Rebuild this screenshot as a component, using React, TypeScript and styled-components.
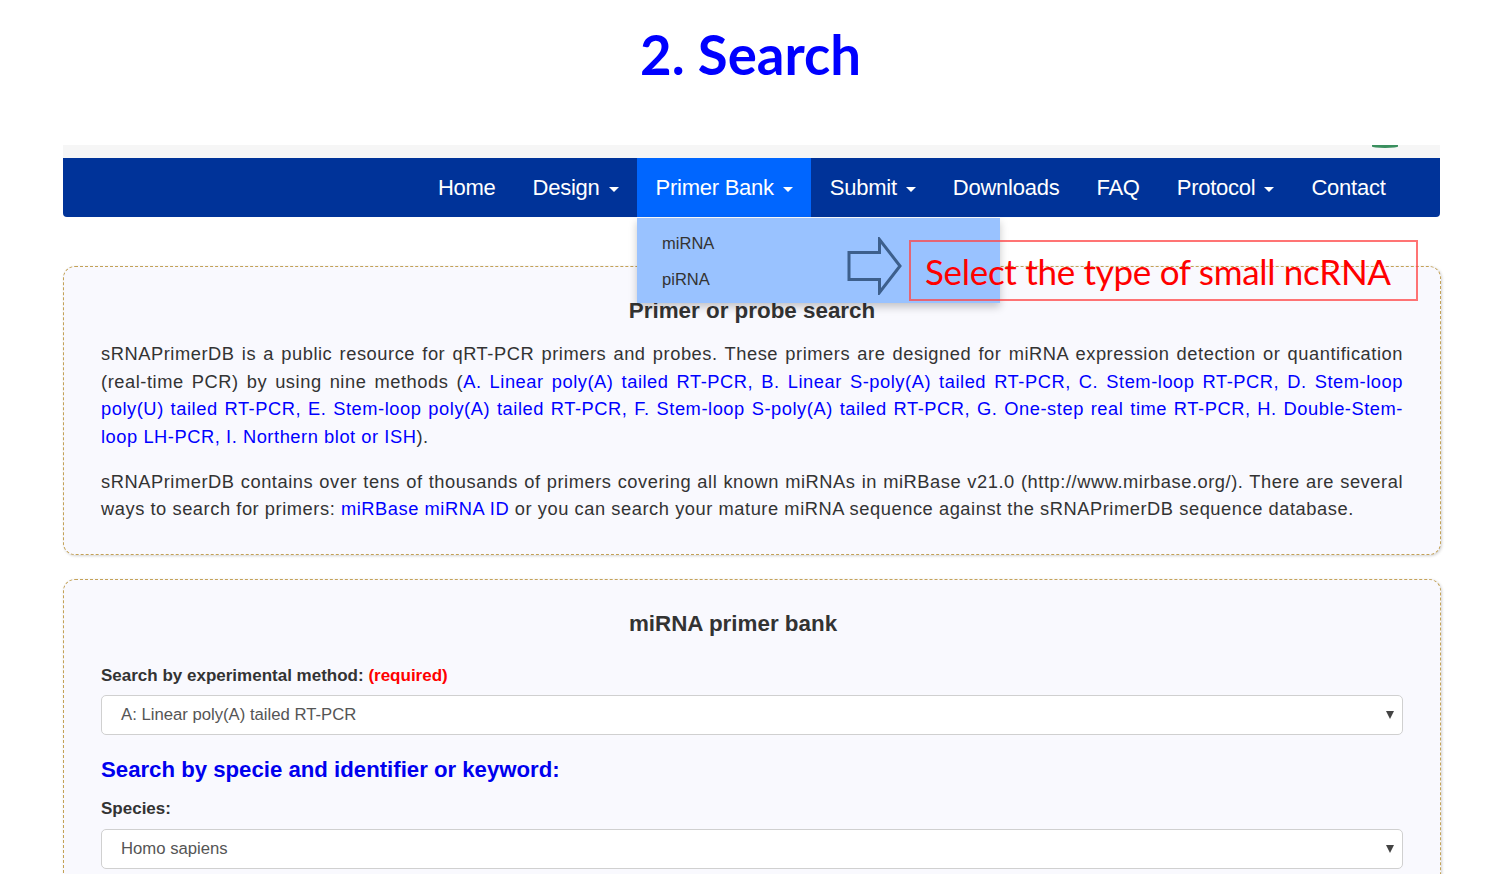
import React from "react";
import styled, { createGlobalStyle } from "styled-components";

const GlobalStyle = createGlobalStyle`
  html, body { margin: 0; padding: 0; background: #ffffff; }
  body { font-family: "Liberation Sans", Arial, sans-serif; color: #333; }
  * { box-sizing: border-box; }
`;

const Page = styled.div`
  position: relative;
  width: 1501px;
  height: 874px;
  overflow: hidden;
`;

const Title = styled.h1`
  margin: 0;
  height: 145px;
  padding-top: 22px;
  text-align: center;
  font-family: Lato, "Open Sans", sans-serif;
  font-weight: 700;
  font-size: 54.5px;
  line-height: 64px;
  color: #0000ff;
`;

const Container = styled.div`
  margin-left: 63px;
  width: 1378px;
`;

const TopBand = styled.div`
  height: 13px;
  width: 1377px;
  background: #f6f6f6;
  display: flex;
  justify-content: flex-end;
  padding-right: 42px;
`;

const GreenArc = styled.span`
  width: 26px;
  height: 3px;
  border-radius: 0 0 50% 50%;
  background: #3a8f5e;
`;

const NavBar = styled.nav`
  width: 1377px;
  height: 59px;
  background: #003399;
  border-radius: 0 0 4px 4px;
  display: flex;
  justify-content: flex-end;
  padding-right: 36px;
`;

const NavItem = styled.div<{ $active?: boolean }>`
  position: relative;
  display: flex;
  align-items: center;
  padding: 0 18.5px;
  height: 59px;
  font-size: 22px;
  color: #ffffff;
  background: ${(p) => (p.$active ? "#0066ff" : "transparent")};
  letter-spacing: -0.25px;
`;

const Caret = styled.span`
  display: inline-block;
  margin-left: 9px;
  margin-top: 3px;
  width: 0;
  height: 0;
  border-top: 5px solid #ffffff;
  border-left: 5px solid transparent;
  border-right: 5px solid transparent;
`;

const Dropdown = styled.div`
  position: absolute;
  left: 0;
  top: 60px;
  width: 363px;
  height: 85px;
  background: #99c2ff;
  box-shadow: 0 4px 8px rgba(0, 0, 0, 0.22);
  padding-top: 7px;
  z-index: 2;
  letter-spacing: 0;
`;

const DropItem = styled.div`
  height: 36px;
  line-height: 36px;
  padding-left: 25px;
  font-size: 16.5px;
  color: #333;
`;

const Panel = styled.section<{ $gap?: number }>`
  margin-top: ${(p) => p.$gap ?? 0}px;
  border: 1px dashed #c4a257;
  border-radius: 12px;
  background: #f9f9fe;
  box-shadow: 1px 1px 3px rgba(0, 0, 0, 0.18);
  padding: 32px 37px 31px;
`;

const PanelHeading = styled.h3<{ $shift?: number }>`
  margin: 0;
  padding-right: ${(p) => p.$shift ?? 0}px;
  text-align: center;
  font-size: 22.4px;
  line-height: 24px;
  font-weight: 700;
  color: #333;
`;

const Para = styled.p<{ $top: number }>`
  margin: ${(p) => p.$top}px 0 0;
  font-size: 18.3px;
  letter-spacing: 0.55px;
  line-height: 27.5px;
  text-align: justify;
  color: #333;
`;

const Link = styled.span`
  color: #0000ff;
`;

const Label = styled.div<{ $top: number }>`
  margin-top: ${(p) => p.$top}px;
  font-size: 17px;
  line-height: 20px;
  font-weight: 700;
  color: #333;
`;

const Required = styled.span`
  color: #ff0000;
`;

const SelectBox = styled.div<{ $top: number }>`
  margin-top: ${(p) => p.$top}px;
  height: 40px;
  background: #ffffff;
  border: 1px solid #d0d0d0;
  border-radius: 5px;
  display: flex;
  align-items: center;
  justify-content: space-between;
  padding: 0 8px 0 19px;
  font-size: 16.7px;
  color: #555;
`;

const SelectArrow = styled.span`
  width: 0;
  height: 0;
  border-top: 8px solid #444;
  border-left: 4px solid transparent;
  border-right: 4px solid transparent;
`;

const BlueHeading = styled.h4`
  margin: 22px 0 0;
  font-size: 22.2px;
  line-height: 26px;
  font-weight: 700;
  color: #0000ee;
`;

const ArrowMark = styled.svg`
  position: absolute;
  left: 847px;
  top: 237px;
  z-index: 3;
`;

const Callout = styled.div`
  position: absolute;
  left: 909px;
  top: 240px;
  width: 509px;
  height: 61px;
  border: 2px solid rgba(255, 70, 70, 0.75);
  z-index: 3;
  display: flex;
  align-items: center;
  padding-left: 14px;
  font-family: Lato, "Open Sans", sans-serif;
  font-size: 35px;
  color: #ff0000;
  letter-spacing: -0.3px;
`;

const navItems: { label: string; caret?: boolean; active?: boolean }[] = [
  { label: "Home" },
  { label: "Design", caret: true },
  { label: "Primer Bank", caret: true, active: true },
  { label: "Submit", caret: true },
  { label: "Downloads" },
  { label: "FAQ" },
  { label: "Protocol", caret: true },
  { label: "Contact" },
];

export default function App() {
  return (
    <Page>
      <GlobalStyle />
      <Title>2. Search</Title>
      <Container>
        <TopBand>
          <GreenArc />
        </TopBand>
        <NavBar>
          {navItems.map((it) => (
            <NavItem key={it.label} $active={it.active}>
              {it.label}
              {it.caret && <Caret />}
              {it.active && (
                <Dropdown>
                  <DropItem>miRNA</DropItem>
                  <DropItem>piRNA</DropItem>
                </Dropdown>
              )}
            </NavItem>
          ))}
        </NavBar>

        <Panel $gap={49}>
          <PanelHeading>Primer or probe search</PanelHeading>
          <Para $top={17}>
            sRNAPrimerDB is a public resource for qRT-PCR primers and probes. These primers are
            designed for miRNA expression detection or quantification (real-time PCR) by using nine
            methods (
            <Link>
              A. Linear poly(A) tailed RT-PCR, B. Linear S-poly(A) tailed RT-PCR, C. Stem-loop
              RT-PCR, D. Stem-loop poly(U) tailed RT-PCR, E. Stem-loop poly(A) tailed RT-PCR, F.
              Stem-loop S-poly(A) tailed RT-PCR, G. One-step real time RT-PCR, H. Double-Stem-loop
              LH-PCR, I. Northern blot or ISH
            </Link>
            ).
          </Para>
          <Para $top={17.5}>
            sRNAPrimerDB contains over tens of thousands of primers covering all known miRNAs in
            miRBase v21.0 (http://www.mirbase.org/). There are several ways to search for primers:{" "}
            <Link>miRBase miRNA ID</Link> or you can search your mature miRNA sequence against the
            sRNAPrimerDB sequence database.
          </Para>
        </Panel>

        <Panel $gap={24}>
          <PanelHeading $shift={38}>miRNA primer bank</PanelHeading>
          <Label $top={30}>
            Search by experimental method: <Required>(required)</Required>
          </Label>
          <SelectBox $top={9}>
            <span>A: Linear poly(A) tailed RT-PCR</span>
            <SelectArrow />
          </SelectBox>
          <BlueHeading>Search by specie and identifier or keyword:</BlueHeading>
          <Label $top={16}>Species:</Label>
          <SelectBox $top={10}>
            <span>Homo sapiens</span>
            <SelectArrow />
          </SelectBox>
          <div style={{ height: 60 }} />
        </Panel>
      </Container>

      <ArrowMark width="56" height="58" viewBox="0 0 56 58">
        <path
          d="M2 15.5 H32.5 V2.5 L53 29 L32.5 55.5 V42.5 H2 Z"
          fill="none"
          stroke="#3d5f8c"
          strokeWidth="3"
          strokeLinejoin="miter"
        />
      </ArrowMark>
      <Callout>Select the type of small ncRNA</Callout>
    </Page>
  );
}
